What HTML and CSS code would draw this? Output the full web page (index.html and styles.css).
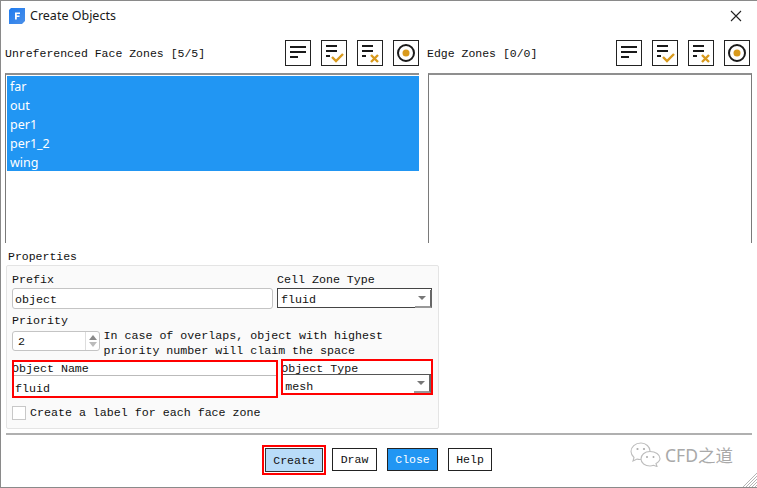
FILE: index.html
```html
<!DOCTYPE html>
<html lang="en">
<head>
<meta charset="utf-8">
<title>Create Objects</title>
<link rel="stylesheet" href="styles.css">
</head>
<body>
<div class="dialog">
  <header class="titlebar">
    <svg class="app-icon" width="16" height="16" viewBox="0 0 16 16"><defs><linearGradient id="g" x1="0" y1="0" x2="1" y2="1"><stop offset="0" stop-color="#1f7cf0"/><stop offset="1" stop-color="#4a8fe8"/></linearGradient></defs><path d="M2 0H16V13L13 16H0V2Z" fill="url(#g)"/><path d="M6 4.5H11V6H7.8V7.5H10.5V9H7.8V11.5H6Z" fill="#fff"/></svg>
    <span class="title">Create Objects</span>
    <svg class="close-x" width="12" height="12" viewBox="0 0 12 12"><path d="M1 1L11 11M11 1L1 11" stroke="#222" stroke-width="1.1" fill="none"/></svg>
  </header>

  <div class="lists">
    <section class="list-col left">
      <div class="list-head">
        <span class="list-title">Unreferenced Face Zones [5/5]</span>
        <div class="tools">
          <button class="tool"><svg width="24" height="24" viewBox="0 0 24 24"><path d="M4 5H20V7H4ZM4 10H20V12H4ZM4 15H12V17H4Z" fill="#1a1a1a"/></svg></button>
          <button class="tool"><svg width="24" height="24" viewBox="0 0 24 24"><path d="M4 4H15V6H4ZM4 9H15V11H4ZM4 14H8V16H4Z" fill="#1a1a1a"/><path d="M10 16L14 20L21 13" stroke="#d99a1c" stroke-width="2.4" fill="none"/></svg></button>
          <button class="tool"><svg width="24" height="24" viewBox="0 0 24 24"><path d="M4 4H15V6H4ZM4 9H15V11H4ZM4 14H8V16H4Z" fill="#1a1a1a"/><path d="M13 14L20 21M20 14L13 21" stroke="#d99a1c" stroke-width="2.4" fill="none"/></svg></button>
          <button class="tool"><svg width="24" height="24" viewBox="0 0 24 24"><circle cx="12" cy="12" r="8" stroke="#1a1a1a" stroke-width="2" fill="none"/><circle cx="12" cy="12" r="3.5" fill="#d99a1c"/></svg></button>
        </div>
      </div>
      <ul class="listbox">
        <li>far</li>
        <li>out</li>
        <li>per1</li>
        <li>per1_2</li>
        <li>wing</li>
      </ul>
    </section>
    <section class="list-col right">
      <div class="list-head">
        <span class="list-title">Edge Zones [0/0]</span>
        <div class="tools">
          <button class="tool"><svg width="24" height="24" viewBox="0 0 24 24"><path d="M4 5H20V7H4ZM4 10H20V12H4ZM4 15H12V17H4Z" fill="#1a1a1a"/></svg></button>
          <button class="tool"><svg width="24" height="24" viewBox="0 0 24 24"><path d="M4 4H15V6H4ZM4 9H15V11H4ZM4 14H8V16H4Z" fill="#1a1a1a"/><path d="M10 16L14 20L21 13" stroke="#d99a1c" stroke-width="2.4" fill="none"/></svg></button>
          <button class="tool"><svg width="24" height="24" viewBox="0 0 24 24"><path d="M4 4H15V6H4ZM4 9H15V11H4ZM4 14H8V16H4Z" fill="#1a1a1a"/><path d="M13 14L20 21M20 14L13 21" stroke="#d99a1c" stroke-width="2.4" fill="none"/></svg></button>
          <button class="tool"><svg width="24" height="24" viewBox="0 0 24 24"><circle cx="12" cy="12" r="8" stroke="#1a1a1a" stroke-width="2" fill="none"/><circle cx="12" cy="12" r="3.5" fill="#d99a1c"/></svg></button>
        </div>
      </div>
      <div class="listbox empty"></div>
    </section>
  </div>

  <div class="props-label">Properties</div>
  <div class="props">
    <div class="row row-prefix">
      <div class="field f-prefix">
        <label>Prefix</label>
        <div class="input">object</div>
      </div>
      <div class="field f-cell">
        <label>Cell Zone Type</label>
        <div class="select">fluid<span class="arrow"></span></div>
      </div>
    </div>
    <div class="priority-label">Priority</div>
    <div class="row row-priority">
      <div class="spin"><span class="spin-val">2</span><span class="spin-btns"><i class="up"></i><i class="down"></i></span></div>
      <p class="hint">In case of overlaps, object with highest<br>priority number will claim the space</p>
    </div>
    <div class="row row-object">
      <div class="mark mark-name">
        <label>Object Name</label>
        <div class="flat-input">fluid</div>
      </div>
      <div class="mark mark-type">
        <label>Object Type</label>
        <div class="select flat">mesh<span class="arrow"></span></div>
      </div>
    </div>
    <div class="check-row"><span class="checkbox"></span><span>Create a label for each face zone</span></div>
  </div>

  <footer class="actions">
    <span class="mark-btn"><button class="btn btn-create">Create</button></span>
    <button class="btn btn-draw">Draw</button>
    <button class="btn btn-close">Close</button>
    <button class="btn btn-help">Help</button>
  </footer>

  <div class="watermark">
    <svg width="31" height="25" viewBox="0 0 31 25"><g fill="#fff" stroke="#bdbdbd" stroke-width="1.1"><path d="M11 1C5 1 1 5 1 9.500C1 12 2.500 14 4 15.500L3 19L7 17C8 17.400 9 17.500 10 17.500C14 17.500 20 14 20 9C20 5 16 1 11 1Z"/><path d="M20 9.500C14.500 9.500 11 13 11 17C11 21 15 24 20 24C21.500 24 22.500 23.700 23.500 23.300L27 24.500L26 21.500C28.500 20 30 18.500 30 16.500C30 12.500 25.500 9.500 20 9.500Z"/></g><circle cx="7.500" cy="7" r="1.100" fill="#aaa"/><circle cx="14" cy="7" r="1.100" fill="#aaa"/><circle cx="17" cy="15" r="1" fill="#aaa"/><circle cx="23.500" cy="15" r="1" fill="#aaa"/></svg>
    <span>CFD之道</span>
  </div>
  <svg class="grip" width="14" height="14" viewBox="0 0 14 14"><path d="M14 0L0 14M14 3L3 14M14 6L6 14M14 9L9 14M14 12L12 14" stroke="#b5b5b5" stroke-width="1"/></svg>
</div>
</body>
</html>
```
FILE: styles.css
```css
* { box-sizing: border-box; }
html, body { margin: 0; padding: 0; }
body { width: 757px; height: 488px; background: #fff; overflow: hidden; }
.dialog {
  position: relative;
  width: 757px;
  height: 488px;
  background: #fff;
  border: 1px solid #8a8a8a;
  border-right: 0;
  font-family: "Liberation Mono", monospace;
  font-size: 11.5px;
  color: #111;
  display: flex;
  flex-direction: column;
}
.titlebar {
  height: 30px;
  display: flex;
  align-items: center;
  padding: 0 15px 0 8px;
  flex: none;
}
.app-icon { flex: none; }
.title {
  margin-left: 5px;
  font-family: "Noto Sans", sans-serif;
  font-size: 12.5px;
  line-height: 28px;
  color: #1a1a1a;
  flex: 1;
}
.lists {
  display: flex;
  padding: 9px 0 0 4px;
  height: 212px;
  flex: none;
}
.list-col { display: flex; flex-direction: column; }
.list-col.left { width: 414px; margin-right: 9px; }
.list-col.right { width: 324px; }
.list-head {
  height: 26px;
  display: flex;
  align-items: center;
  justify-content: space-between;
  margin-bottom: 7px;
}
.list-col.right .list-head { margin-right: 2px; margin-left: -1px; }
.tools { display: flex; gap: 10px; }
.tool {
  width: 26px;
  height: 26px;
  padding: 0;
  background: #fff;
  border: 1px solid #222;
  display: flex;
  align-items: center;
  justify-content: center;
}
.listbox {
  list-style: none;
  margin: 0;
  padding: 1px 0 0 1px;
  height: 170px;
  border: 1px solid #7a7a7a;
  border-top-width: 2px;
  border-bottom: 0;
  border-top-color: #8f8f8f;
}
.list-col.left .listbox { border-right: 0; }
.listbox li {
  height: 19px;
  line-height: 21px;
  background: #2196f3;
  color: #fff;
  padding-left: 3px;
  font-family: "Noto Sans", sans-serif;
  font-size: 12.5px;
}
.props-label { margin: 6px 0 0 7px; height: 15px; line-height: 15px; }
.props {
  margin: 1px 0 0 5px;
  width: 433px;
  height: 164px;
  background: #fafafa;
  border: 1px solid #e4e4e4;
  border-radius: 2px;
  padding: 6px 5px 0 5px;
  flex: none;
  font-size: 11.65px;
}
.row { display: flex; }
.field label { display: block; height: 16px; line-height: 15px; }
.f-prefix { width: 261px; margin-right: 4px; }
.f-cell { width: 155px; }
.input {
  height: 21px;
  line-height: 22px;
  background: #fff;
  border: 1px solid #c4c4c4;
  border-radius: 3px;
  padding-left: 2px;
}
.select {
  position: relative;
  height: 20px;
  line-height: 21px;
  background: #fff;
  border: 1px solid #444;
  padding-left: 3px;
}
.arrow {
  position: absolute;
  right: -1px;
  bottom: -1px;
  width: 17px;
  height: 18px;
  background: #fff;
  border-right: 2px solid #666;
  border-bottom: 2px solid #999;
}
.arrow::after {
  content: "";
  position: absolute;
  left: 3px;
  top: 6px;
  border-left: 4px solid transparent;
  border-right: 4px solid transparent;
  border-top: 4px solid #777;
}
.priority-label { margin-top: 4px; height: 16px; line-height: 15px; }
.row-priority { height: 30px; }
.spin {
  width: 88px;
  height: 20px;
  margin-top: 2px;
  background: #fff;
  border: 1px solid #c4c4c4;
  border-radius: 3px;
  display: flex;
  justify-content: space-between;
  line-height: 19px;
  padding-left: 5px;
  flex: none;
}
.spin-btns {
  width: 14px;
  border-left: 1px solid #ddd;
  display: flex;
  flex-direction: column;
  align-items: center;
  justify-content: center;
  gap: 2px;
}
.up { border: 4px solid transparent; border-top: 0; border-bottom: 5px solid #8a8a8a; }
.down { border: 4px solid transparent; border-bottom: 0; border-top: 5px solid #bbb; }
.hint { margin: -1px 0 0 3.500px; line-height: 15px; }
.row-object { align-items: flex-start; margin-top: 1px; }
.mark { border: 2px solid #f00; background: #fff; overflow: hidden; }
.mark label { display: block; white-space: nowrap; margin-left: -2px; }
.mark-name { width: 267px; height: 38px; }
.mark-name label { height: 13px; line-height: 14px; }
.flat-input {
  height: 21px;
  line-height: 25px;
  border-top: 1px solid #bbb;
  padding-left: 1px;
}
.mark-type { width: 152px; height: 36px; margin: -1px 0 0 3px; }
.mark-type label { height: 13px; line-height: 15px; }
.select.flat {
  height: 19px;
  line-height: 24px;
  border-width: 1px 0 0 0;
  border-top-color: #555;
  padding-left: 2px;
}
.select.flat .arrow { right: 0; bottom: 0; }
.check-row {
  display: flex;
  align-items: center;
  gap: 4px;
  margin-top: 7px;
  height: 15px;
}
.checkbox {
  width: 14px;
  height: 14px;
  background: #fff;
  border: 1px solid #c8c8c8;
  flex: none;
}
.actions {
  margin: 4px 5px 0 5px;
  border-top: 2px solid #b0b0b0;
  height: 50px;
  padding-top: 10px;
  padding-left: 256px;
  display: flex;
  align-items: flex-start;
  flex: none;
}
.btn {
  font: inherit;
  height: 23px;
  padding: 0;
  background: #fff;
  color: #111;
  border: 1px solid #222;
}
.mark-btn {
  border: 2px solid #f00;
  padding: 1px;
  width: 64px;
  height: 30px;
  margin-right: 6px;
  display: flex;
}
.btn-create { width: 58px; height: 24px; background: #b9dcf9; border-color: #333; }
.btn-draw { width: 45px; margin: 3px 10px 0 0; }
.btn-close { width: 51px; margin: 3px 10px 0 0; background: #2196f3; color: #fff; }
.btn-help { width: 44px; margin-top: 3px; }
.watermark {
  position: absolute;
  left: 629px;
  top: 441px;
  display: flex;
  align-items: center;
  gap: 4px;
  color: #a9a9a9;
  font-family: "Noto Sans", "Noto Sans CJK SC", sans-serif;
  font-size: 17.5px;
}
.grip { position: absolute; right: 0; bottom: 0; }
```
